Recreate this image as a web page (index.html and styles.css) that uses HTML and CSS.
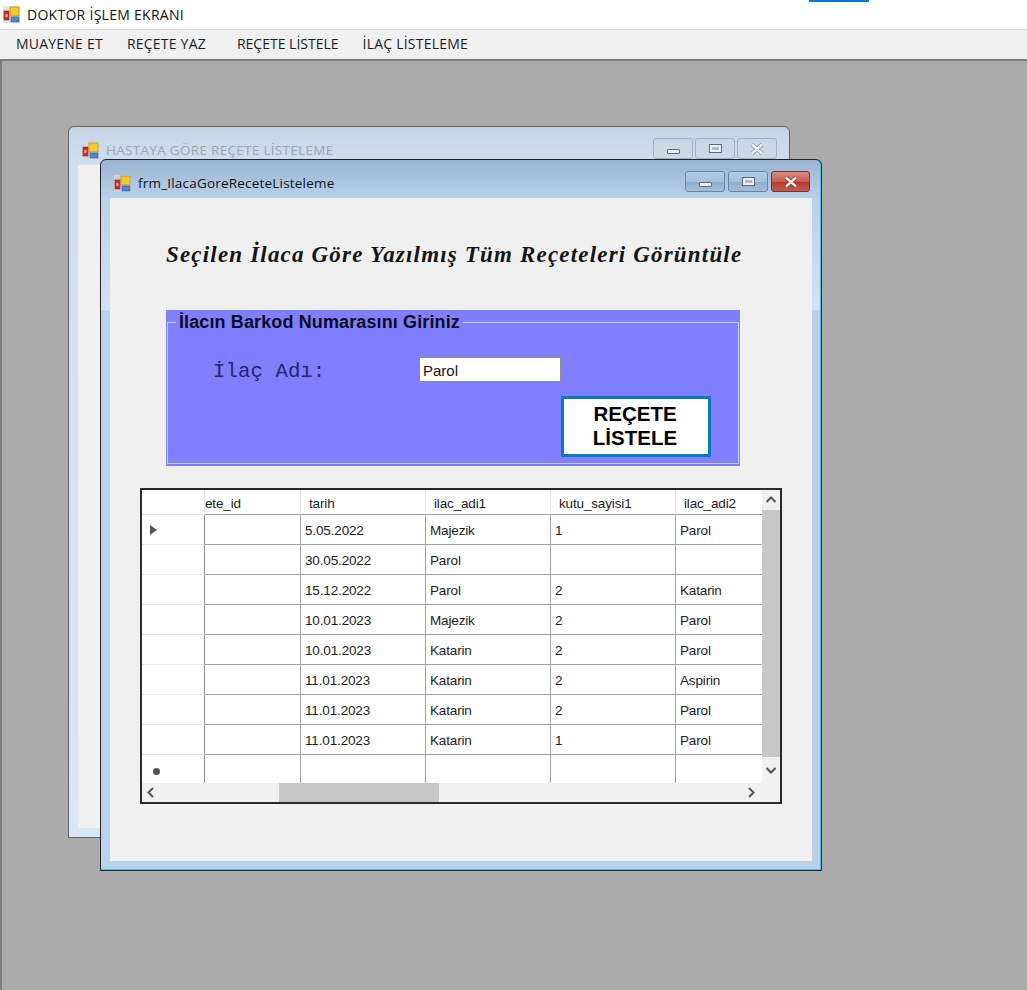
FILE: index.html
```html
<!DOCTYPE html>
<html lang="tr">
<head>
    <meta charset="UTF-8">
    <title>DOKTOR İŞLEM EKRANI</title>
    <link rel="stylesheet" href="styles.css">
</head>
<body>
    <svg class="defs" width="0" height="0">
        <symbol id="appIcon" viewBox="0 0 17 17">
            <rect x="0" y="0" width="17" height="17" fill="#d8d8d8" opacity="0.7"/>
            <rect x="1" y="5" width="5" height="9" fill="#c9302c" stroke="#8c1f1c" stroke-width="0.6"/>
            <rect x="2.5" y="8" width="2" height="3" fill="#f0b0a8"/>
            <rect x="7" y="1" width="9" height="9" fill="#f6c92e" stroke="#b98f1c" stroke-width="0.8"/>
            <rect x="8" y="11" width="8" height="5" fill="#4f86cf" stroke="#2f5f9f" stroke-width="0.6"/>
        </symbol>
    </svg>

    <div class="top-accent"></div>

    <header class="app-title">
        <svg class="icon"><use href="#appIcon"/></svg>
        <span>DOKTOR İŞLEM EKRANI</span>
    </header>

    <nav class="menu">
        <span class="menu-item">MUAYENE ET</span>
        <span class="menu-item menu-item-wide">REÇETE YAZ</span>
        <span class="menu-item menu-item-tight">REÇETE LİSTELE</span>
        <span class="menu-item">İLAÇ LİSTELEME</span>
    </nav>

    <main class="mdi">
        <!-- arkadaki pencere -->
        <section class="window window-back">
            <div class="caption">
                <svg class="icon"><use href="#appIcon"/></svg>
                <span class="caption-text">HASTAYA GÖRE REÇETE LİSTELEME</span>
                <div class="caption-buttons">
                    <span class="cap-btn"><i class="glyph-min"></i></span>
                    <span class="cap-btn"><i class="glyph-max"></i></span>
                    <span class="cap-btn">
                        <svg width="16" height="12" viewBox="0 0 16 12"><path d="M3 1.5 L13 10.5 M13 1.5 L3 10.5" stroke="#7d8894" stroke-width="3.8"/><path d="M3 1.5 L13 10.5 M13 1.5 L3 10.5" stroke="#f4f4f4" stroke-width="2.4"/></svg>
                    </span>
                </div>
            </div>
            <div class="client"></div>
        </section>

        <!-- ondeki pencere -->
        <section class="window window-front">
            <div class="caption">
                <svg class="icon"><use href="#appIcon"/></svg>
                <span class="caption-text">frm_IlacaGoreReceteListeleme</span>
                <div class="caption-buttons">
                    <span class="cap-btn"><i class="glyph-min"></i></span>
                    <span class="cap-btn"><i class="glyph-max"></i></span>
                    <span class="cap-btn cap-close">
                        <svg width="16" height="12" viewBox="0 0 16 12"><path d="M3 1.5 L13 10.5 M13 1.5 L3 10.5" stroke="#6b2a22" stroke-width="3.8"/><path d="M3 1.5 L13 10.5 M13 1.5 L3 10.5" stroke="#f2f2f2" stroke-width="2.4"/></svg>
                    </span>
                </div>
            </div>
            <div class="client">
                <h1 class="form-heading">Seçilen İlaca Göre Yazılmış Tüm Reçeteleri Görüntüle</h1>

                <div class="group">
                    <fieldset class="group-box">
                        <legend>İlacın Barkod Numarasını Giriniz</legend>
                        <div class="field-row">
                            <label class="field-label">İlaç Adı:</label>
                            <div class="text-box">Parol</div>
                        </div>
                        <div class="action-row">
                            <button class="list-btn">REÇETE<br>LİSTELE</button>
                        </div>
                    </fieldset>
                </div>

                <div class="data-grid">
                    <table class="rows">
                        <colgroup>
                            <col class="col-head"><col class="col-id"><col class="col-w"><col class="col-w"><col class="col-w"><col class="col-last">
                        </colgroup>
                        <thead>
                            <tr><th></th><th class="clipped">ete_id</th><th>tarih</th><th>ilac_adi1</th><th>kutu_sayisi1</th><th>ilac_adi2</th></tr>
                        </thead>
                        <tbody>
                            <tr><th class="row-head"><i class="row-arrow"></i></th><td></td><td>5.05.2022</td><td>Majezik</td><td>1</td><td>Parol</td></tr>
                            <tr><th class="row-head"></th><td></td><td>30.05.2022</td><td>Parol</td><td></td><td></td></tr>
                            <tr><th class="row-head"></th><td></td><td>15.12.2022</td><td>Parol</td><td>2</td><td>Katarin</td></tr>
                            <tr><th class="row-head"></th><td></td><td>10.01.2023</td><td>Majezik</td><td>2</td><td>Parol</td></tr>
                            <tr><th class="row-head"></th><td></td><td>10.01.2023</td><td>Katarin</td><td>2</td><td>Parol</td></tr>
                            <tr><th class="row-head"></th><td></td><td>11.01.2023</td><td>Katarin</td><td>2</td><td>Aspirin</td></tr>
                            <tr><th class="row-head"></th><td></td><td>11.01.2023</td><td>Katarin</td><td>2</td><td>Parol</td></tr>
                            <tr><th class="row-head"></th><td></td><td>11.01.2023</td><td>Katarin</td><td>1</td><td>Parol</td></tr>
                            <tr class="new-row"><th class="row-head"><i class="row-star"></i></th><td></td><td></td><td></td><td></td><td></td></tr>
                        </tbody>
                    </table>

                    <div class="vscroll">
                        <svg class="arrow" width="20" height="20" viewBox="0 0 20 20"><path d="M5.5 12 L10 7.5 L14.5 12" fill="none" stroke="#555" stroke-width="2"/></svg>
                        <div class="vthumb"></div>
                        <svg class="arrow" width="20" height="26" viewBox="0 0 20 26"><path d="M5.5 11 L10 15.5 L14.5 11" fill="none" stroke="#555" stroke-width="2"/></svg>
                    </div>

                    <div class="hscroll">
                        <svg class="arrow" width="20" height="19" viewBox="0 0 20 19"><path d="M11 5 L6.5 9.5 L11 14" fill="none" stroke="#555" stroke-width="2"/></svg>
                        <div class="htrack"><div class="hthumb"></div></div>
                        <svg class="arrow" width="20" height="19" viewBox="0 0 20 19"><path d="M7 5 L11.5 9.5 L7 14" fill="none" stroke="#555" stroke-width="2"/></svg>
                    </div>
                    <div class="corner"></div>
                </div>
            </div>
        </section>
    </main>
</body>
</html>
```

FILE: styles.css
```css
/* Genel */
html, body {
    margin: 0;
    height: 100%;
}
body {
    width: 1027px;
    height: 990px;
    display: flex;
    flex-direction: column;
    overflow: hidden;
    background: #fff;
    font-family: "Open Sans", sans-serif;
    color: #111;
}
.defs { position: absolute; }
.icon { width: 17px; height: 17px; flex: none; }

.top-accent {
    position: absolute;
    top: 0;
    left: 809px;
    width: 60px;
    height: 2px;
    background: #0078d7;
}

/* Ana pencere basligi ve menu */
.app-title {
    height: 29px;
    flex: none;
    display: flex;
    align-items: center;
    gap: 7px;
    padding-left: 3px;
    font-size: 14px;
    letter-spacing: 0.28px;
}
.menu {
    height: 30px;
    flex: none;
    display: flex;
    align-items: center;
    padding: 0 0 3px 4px;
    background: #f0f0f0;
    border-top: 1px solid #dcdcdc;
    box-sizing: border-box;
    font-size: 14px;
    letter-spacing: 0.22px;
    color: #1c1c28;
}
.menu-item { padding: 0 12px; }
.menu-item-wide { padding-right: 19px; }
.menu-item-tight { letter-spacing: 0; }

/* MDI alani */
.mdi {
    flex: 1;
    position: relative;
    background: #ababab;
    border-top: 2px solid #7c7c7c;
    border-left: 2px solid #7c7c7c;
}

.window {
    position: absolute;
    display: flex;
    flex-direction: column;
    width: 722px;
    height: 712px;
    box-sizing: border-box;
    padding: 0 9px 9px;
    border: 1px solid #222;
    border-radius: 6px 6px 0 0;
}
.window-back {
    left: 66px;
    top: 65px;
    border-color: #5f6468;
    background: linear-gradient(#c4d4e3, #cfe0f0 40px, #d7e6f5);
}
.window-front {
    left: 98px;
    top: 98px;
    background: linear-gradient(#99b4d1, #b9d1ea 38px, #c6d9ee 90px, #d3e2f3 150px, #b9d1ea 151px);
    box-shadow: inset -1px 0 0 #3ec6e8, inset 0 -1px 0 #3ec6e8;
}

.caption {
    height: 38px;
    flex: none;
    display: flex;
    align-items: center;
    gap: 7px;
    box-sizing: border-box;
    padding: 8px 0 0 4px;
    font-size: 13.5px;
    letter-spacing: 0.2px;
}
.window-back .caption { color: #9aa5b0; letter-spacing: 0.3px; }
.caption-text { flex: 1; }
.caption-buttons {
    display: flex;
    gap: 2px;
    align-self: flex-start;
    margin-top: 3px;
    margin-right: 3px;
}
.window-front .caption-buttons { gap: 3px; margin-right: 2px; }
.cap-btn {
    width: 40px;
    height: 21px;
    box-sizing: border-box;
    display: flex;
    align-items: center;
    justify-content: center;
    border: 1px solid #6b84a0;
    border-radius: 3px;
    background: linear-gradient(#b4cbe3, #a6c0dc 50%, #8eaccd 52%, #a4bfdc);
}
.window-back .cap-btn {
    border-color: #a3b3c4;
    background: linear-gradient(#c9d8e7, #cad9e8);
}
.cap-close {
    width: 39px;
    border-color: #6d3535;
    background: linear-gradient(#d98a7c, #c9604e 50%, #b53a28 52%, #c55c49);
}
.glyph-min {
    width: 11px;
    height: 3px;
    margin-top: 5px;
    background: #eee;
    border: 1px solid #5a6b7d;
    border-radius: 1px;
}
.glyph-max {
    width: 7px;
    height: 3px;
    background: #aebccc;
    border: 2px solid #eee;
    outline: 1px solid #5a6b7d;
}

.client {
    flex: 1;
    background: #f0f0f0;
    box-sizing: border-box;
    padding: 0 0 0 30px;
}

/* Form icerigi */
.form-heading {
    margin: 44px 0 0 26px;
    height: 68px;
    font-family: "Liberation Serif", serif;
    font-style: italic;
    font-weight: bold;
    font-size: 23px;
    letter-spacing: 1.18px;
    line-height: 26px;
    color: #141414;
    white-space: nowrap;
}

.group {
    width: 574px;
    height: 156px;
    margin-left: 26px;
    box-sizing: border-box;
    background: #7f7fff;
}
.group-box {
    margin: 0 1px;
    padding: 0;
    height: 154px;
    box-sizing: border-box;
    min-width: 0;
    border: 1px solid #c9c9f5;
}
.group-box legend {
    margin-left: 8px;
    padding: 0 3px;
    height: 24px;
    font-family: "Liberation Sans", sans-serif;
    font-weight: bold;
    font-size: 18px;
    letter-spacing: 0.12px;
    line-height: 24px;
    color: #0c0c1e;
}
.field-row {
    display: flex;
    align-items: flex-start;
    margin-top: 23px;
    padding-left: 45px;
}
.field-label {
    width: 206px;
    font-family: "Liberation Mono", monospace;
    font-size: 20.8px;
    line-height: 30px;
    color: #262668;
}
.text-box {
    width: 142px;
    height: 25px;
    box-sizing: border-box;
    padding-left: 3px;
    background: #fff;
    border: 1px solid #8d8d8d;
    font-family: "Liberation Sans", sans-serif;
    font-size: 15px;
    line-height: 26px;
    color: #1a1020;
}
.action-row {
    display: flex;
    justify-content: flex-end;
    margin-top: 9px;
    padding-right: 27px;
}
.list-btn {
    width: 150px;
    height: 61px;
    padding: 0 2px 2px 0;
    background: #fff;
    border: 3px solid #0a78c8;
    font-family: "Liberation Sans", sans-serif;
    font-weight: bold;
    font-size: 20.5px;
    line-height: 24px;
    color: #000;
}

/* Veri tablosu */
.data-grid {
    width: 642px;
    height: 316px;
    margin-top: 22px;
    box-sizing: border-box;
    border: 2px solid #2a2a2a;
    display: grid;
    grid-template-columns: 620px 18px;
    grid-template-rows: 293px 19px;
    background: #f0f0f0;
    font-family: "Liberation Sans", sans-serif;
    font-size: 13.5px;
    letter-spacing: -0.15px;
}
.rows {
    width: 620px;
    height: 293px;
    table-layout: fixed;
    border-collapse: separate;
    border-spacing: 0;
    background: #fff;
    color: #1c1c24;
}
.col-head { width: 63px; }
.col-id { width: 96px; }
.col-w { width: 125px; }
.col-last { width: 86px; }
.rows thead th {
    height: 22px;
    padding: 2px 0 0 8px;
    font-weight: normal;
    text-align: left;
    border-right: 1px solid #e6e6e6;
    border-bottom: 1px solid #a0a0a0;
}
.rows thead th.clipped { padding-left: 0; }
.rows thead th:first-child { border-bottom-color: #e6e6e6; }
.rows thead th:last-child { border-right: none; }
.rows td {
    height: 27px;
    padding: 2px 0 0 4px;
    border-right: 1px solid #a0a0a0;
    border-bottom: 1px solid #a0a0a0;
    white-space: nowrap;
    overflow: hidden;
}
.rows td:last-child { border-right: none; }
.row-head {
    padding: 0;
    border-right: 1px solid #8f8f8f;
    border-bottom: 1px solid #e6e6e6;
    text-align: left;
}
.new-row td, .new-row .row-head { border-bottom: none; height: 26px; }
.row-arrow {
    display: block;
    margin: 1px 0 0 8px;
    width: 0;
    height: 0;
    border-left: 7px solid #555;
    border-top: 5px solid transparent;
    border-bottom: 5px solid transparent;
}
.row-star {
    display: block;
    margin: 4px 0 0 11px;
    width: 7px;
    height: 7px;
    border-radius: 50%;
    background: #555;
}
.arrow { display: block; flex: none; }
.vscroll {
    display: flex;
    flex-direction: column;
    width: 18px;
    overflow: hidden;
}
.vscroll .arrow { margin-left: -1px; }
.vthumb { height: 247px; flex: none; background: #c8c8c8; }
.hscroll {
    grid-column: 1;
    display: flex;
    align-items: center;
}
.htrack { flex: 1; }
.hthumb { width: 160px; height: 19px; margin-left: 117px; background: #c8c8c8; }
.corner { background: #f0f0f0; }
```
